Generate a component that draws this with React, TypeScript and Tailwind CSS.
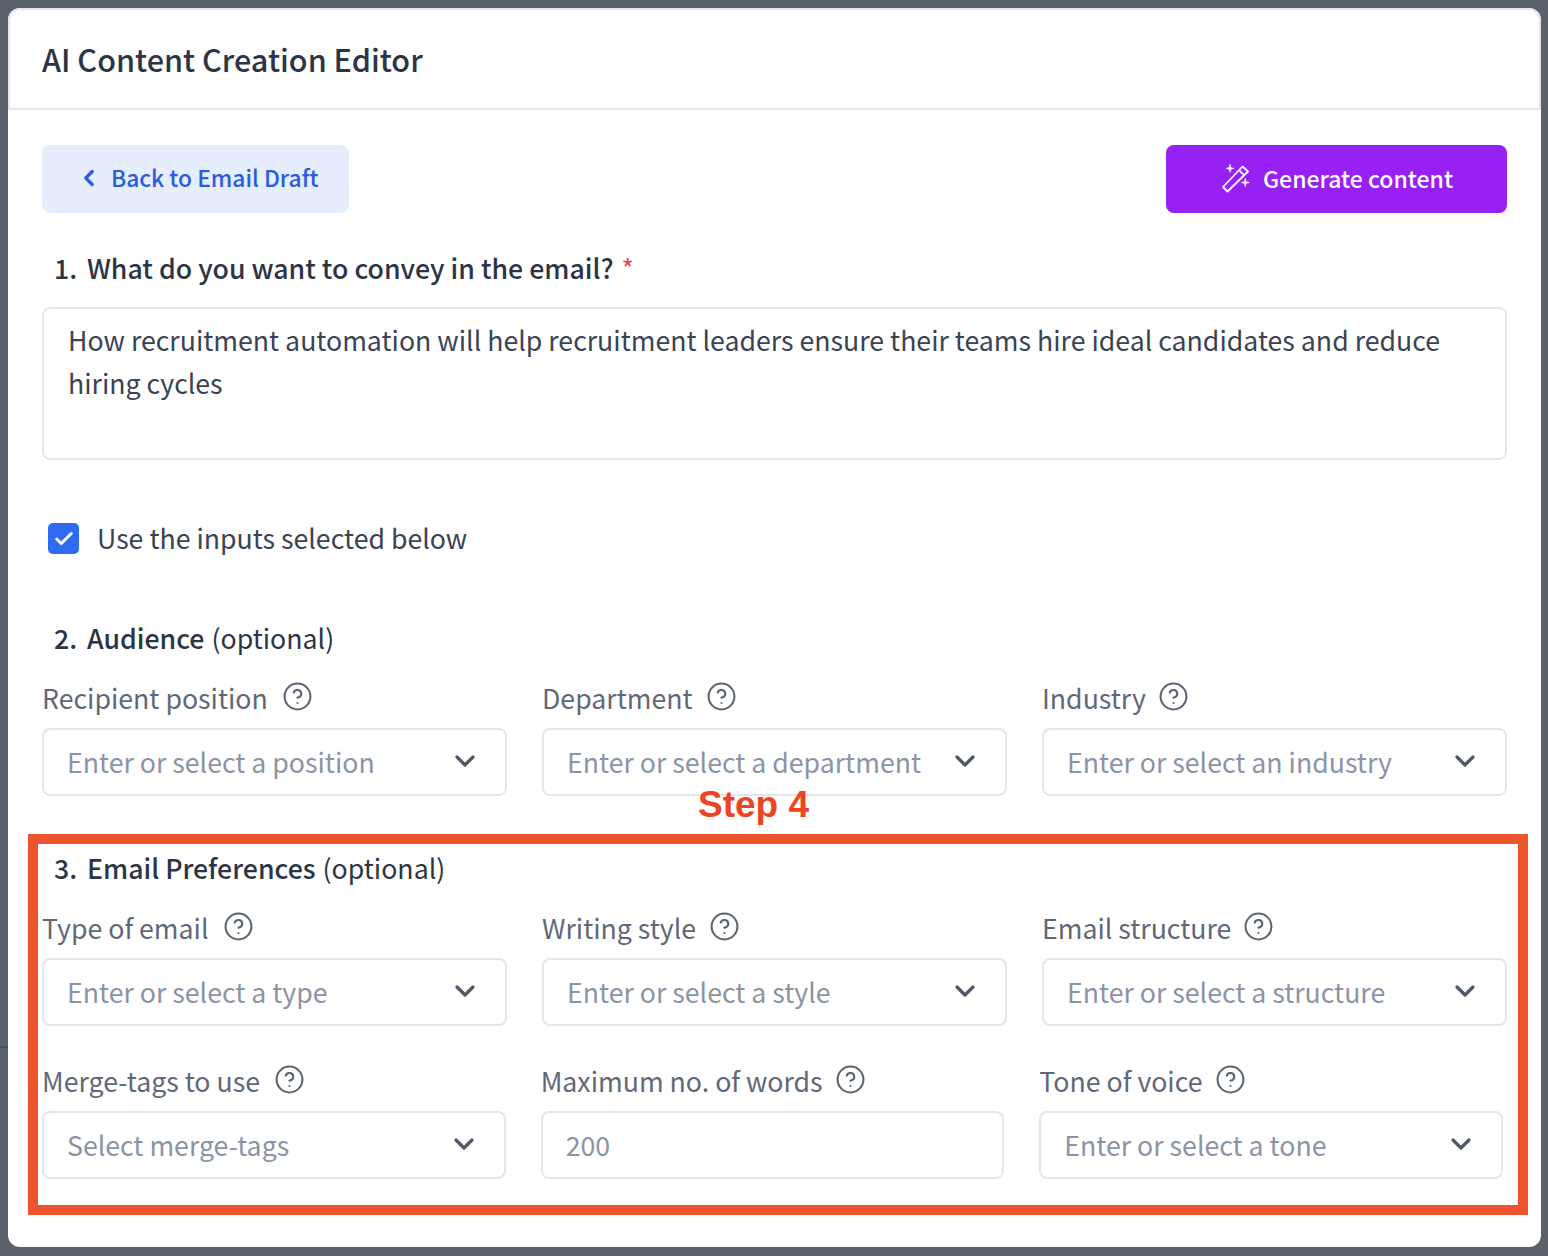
import { ChevronDown, ChevronLeft, CircleHelp, Check } from "lucide-react";

const FONT = "font-['Noto_Sans_CJK_SC','Noto_Sans',sans-serif]";

function WandIcon() {
  return (
    <svg width="30" height="30" viewBox="0 0 30 30" fill="none" stroke="white" strokeWidth="1.8" strokeLinejoin="round">
      <path d="M2 24 L21.5 3.5 L27 8.5 L6.5 28.5 Z" />
      <path d="M18 7.2 L23.3 12.3" />
      <path d="M9 1.5 C9.3 4.4 9.9 5 12.8 5.4 C9.9 5.8 9.3 6.4 9 9.3 C8.7 6.4 8.1 5.8 5.2 5.4 C8.1 5 8.7 4.4 9 1.5 Z" fill="white" strokeWidth="0.8" />
      <path d="M24.3 15.5 C24.6 18.4 25.2 19 28.2 19.5 C25.2 20 24.6 20.6 24.3 23.5 C24 20.6 23.4 20 20.4 19.5 C23.4 19 24 18.4 24.3 15.5 Z" fill="white" strokeWidth="0.8" />
    </svg>
  );
}

function Field({ label, placeholder, select = true, gap }: { label: string; placeholder: string; select?: boolean; gap: string }) {
  return (
    <div>
      <div className={`flex h-[30px] items-center pb-[2px] text-[26.7px] leading-[28px] text-[#5f6878] ${gap}`}>
        <span className="whitespace-nowrap">{label}</span>
        <CircleHelp className="mb-[3px] size-[31px] shrink-0 text-[#5a6372]" strokeWidth={1.6} />
      </div>
      <div className="mt-[14px] flex h-[68px] items-center justify-between rounded-[8px] border-2 border-[#e4e6eb] bg-white pl-[23px] pr-[24px]">
        <span className="whitespace-nowrap text-[26.7px] leading-[36px] text-[#8b94a5]">{placeholder}</span>
        {select && <ChevronDown className="mb-[2px] size-[32px] shrink-0 text-[#4f5868]" strokeWidth={2.4} />}
      </div>
    </div>
  );
}

function SectionTitle({ n, title, note }: { n: string; title: string; note?: string }) {
  return (
    <div className="flex h-[36px] items-center pl-[12px] text-[26.7px] leading-[36px] text-[#2c3545]">
      <span className="w-[33px] font-medium">{n}</span>
      <span className="font-medium">{title}</span>
      {note && <span className="ml-[7px]">{note}</span>}
    </div>
  );
}

export default function App() {
  return (
    <div className={`${FONT} relative h-[1256px] w-full overflow-hidden bg-[#5a606c] pb-[9px] pl-[8px] pr-[7px] pt-[8px]`}>
      {/* stray line of the page behind the modal */}
      <div className="absolute left-0 top-[1046px] h-[2px] w-[8px] bg-[#3c5078]" />

      <div className="relative h-full rounded-[12px] bg-white">
        <header className="flex h-[102px] items-center rounded-t-[12px] border-x-2 border-b-2 border-t-2 border-[#e4e6eb] pl-[32px] pt-[2px] text-[30.6px] font-medium text-[#2c3545]">
          AI Content Creation Editor
        </header>

        <div className="pl-[34px] pr-[34px] pt-[35px]">
          <div className="flex items-center justify-between">
            <button className="flex h-[68px] w-[307px] items-center rounded-[8px] bg-[#e6edfd] pb-[2px] pl-[34px] text-[22.8px] font-medium text-[#2b5be0]">
              <ChevronLeft className="size-[26px]" strokeWidth={3} />
              <span className="ml-[9px] whitespace-nowrap">Back to Email Draft</span>
            </button>
            <button className="flex h-[68px] w-[341px] items-center rounded-[8px] bg-[#9621f2] pb-[2px] pl-[55px] text-[23px] font-medium text-white">
              <WandIcon />
              <span className="ml-[12px] whitespace-nowrap">Generate content</span>
            </button>
          </div>

          <div className="mt-[37px] flex h-[36px] items-center pl-[12px] text-[26.7px] leading-[36px] text-[#2c3545]">
            <span className="w-[33px] font-medium">1.</span>
            <span className="font-medium">What do you want to convey in the email?</span>
            <span className="ml-[8px] text-[26.7px] text-[#e5484d]">*</span>
          </div>

          <div className="mt-[21px] h-[153px] rounded-[8px] border-2 border-[#e4e6eb] pl-[24px] pr-[24px] pt-[9px] text-[26.7px] leading-[43px] text-[#3a4353]">
            How recruitment automation will help recruitment leaders ensure their teams hire ideal candidates and reduce hiring cycles
          </div>

          <label className="ml-[6px] mt-[63px] flex h-[31px] items-center">
            <span className="flex size-[31px] items-center justify-center rounded-[5px] bg-[#2f6bf1]">
              <Check className="size-[22px] text-white" strokeWidth={3.2} />
            </span>
            <span className="mb-[2px] ml-[18px] text-[26.7px] leading-[36px] text-[#3a4353]">Use the inputs selected below</span>
          </label>

          <div className="mt-[66px]">
            <SectionTitle n="2." title="Audience" note="(optional)" />
          </div>
          <div className="mt-[28px] grid grid-cols-3 gap-x-[35px]">
            <Field label="Recipient position" placeholder="Enter or select a position" gap="gap-[14px]" />
            <Field label="Department" placeholder="Enter or select a department" gap="gap-[13px]" />
            <Field label="Industry" placeholder="Enter or select an industry" gap="gap-[12px]" />
          </div>

          <div className="mt-[54px]">
            <SectionTitle n="3." title="Email Preferences" note="(optional)" />
          </div>
          <div className="mt-[28px] grid grid-cols-3 gap-x-[35px]">
            <Field label="Type of email" placeholder="Enter or select a type" gap="gap-[15px]" />
            <Field label="Writing style" placeholder="Enter or select a style" gap="gap-[13px]" />
            <Field label="Email structure" placeholder="Enter or select a structure" gap="gap-[12px]" />
          </div>
          <div className="mt-[41px] grid grid-cols-3 gap-x-[35px] pr-[4px]">
            <Field label="Merge-tags to use" placeholder="Select merge-tags" gap="gap-[14px]" />
            <Field label="Maximum no. of words" placeholder="200" select={false} gap="gap-[12px]" />
            <Field label="Tone of voice" placeholder="Enter or select a tone" gap="gap-[13px]" />
          </div>
        </div>

        {/* annotation drawn over the form */}
        <div className="pointer-events-none absolute left-[20px] top-[826px] h-[381px] w-[1500px] border-[10px] border-[#ec542e]" />
        <span className="absolute left-[690px] top-[776px] font-['Liberation_Sans',sans-serif] text-[37px] font-bold leading-[42px] text-[#ee4423]">
          Step 4
        </span>
      </div>
    </div>
  );
}
